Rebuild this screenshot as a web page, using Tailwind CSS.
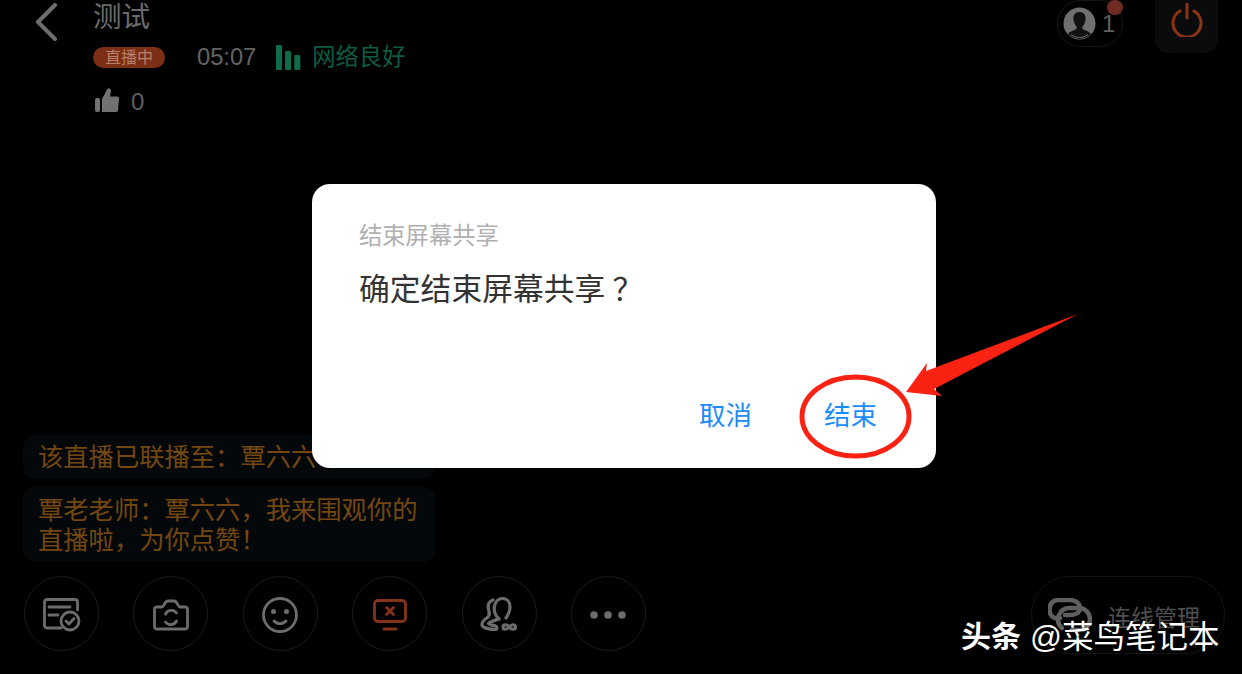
<!DOCTYPE html>
<html lang="zh">
<head>
<meta charset="utf-8">
<script src="https://cdn.jsdelivr.net/npm/@tailwindcss/browser@4"></script>
</head>
<body class="bg-black">
<div class="relative w-[1242px] h-[674px] overflow-hidden bg-black font-['Liberation_Sans','Noto_Sans_CJK_SC',sans-serif]">

  <!-- header -->
  <header class="flex justify-between items-start h-[120px]">
    <div class="flex items-start">
      <svg class="ml-[35px] mt-[3px] w-[23px] h-[38px]" viewBox="0 0 23 38" fill="none" stroke="#6e6e6e" stroke-width="4" stroke-linecap="round" stroke-linejoin="round"><path d="M20 2 L3 19 L20 36"/></svg>
      <div class="ml-[35px] flex flex-col">
        <div class="h-[34px] text-[28.500px] leading-[34px] text-[#6b6b6b]">测试</div>
        <div class="flex items-center mt-[11px] h-[24px]">
          <span class="w-[72px] h-[21px] rounded-full bg-[#7c2f14] text-[#b9806a] text-[16px] leading-[21px] text-center">直播中</span>
          <span class="ml-[32px] text-[23.700px] leading-[24px] text-[#646464]">05:07</span>
          <svg class="ml-[20px] w-[25px] h-[25px]" viewBox="0 0 25 25" fill="#0e6b4c"><rect x="0" y="0" width="6" height="25" rx="1"/><rect x="9" y="6" width="6" height="19" rx="1"/><rect x="18.300" y="10" width="6" height="15" rx="1"/></svg>
          <span class="ml-[11px] text-[23.300px] leading-[24px] text-[#0e5c45]">网络良好</span>
        </div>
        <div class="flex items-center mt-[19px] h-[26px]">
          <svg class="ml-[2px] -mt-[2px] w-[24px] h-[25px]" viewBox="0 0 24 25" fill="#717171"><rect x="0" y="10" width="5" height="14" rx="2"/><path d="M7 11 L12 1.500 C13 -0.500 16 0 16 3 L15 8.500 L22 8.500 C24 8.500 24 10 24 11 L23 22 C23 23.500 22 24 21 24 L7 24 Z"/></svg>
          <span class="ml-[12px] mt-[2px] text-[24px] leading-[26px] text-[#5f5f5f]">0</span>
        </div>
      </div>
    </div>
    <div class="flex items-start">
      <div class="relative flex items-center w-[66px] h-[47px] mr-[32px] rounded-full border border-[#161616] pl-[5px]">
        <svg class="w-[33px] h-[33px]" viewBox="0 0 33 33"><circle cx="16.500" cy="16.500" r="16" fill="#6f6f6f"/><path d="M16.500 5 C11.500 5 10 9 10.500 13 C11 16 12 18 13.500 19.500 L13.500 22 C10 24 6.500 24.500 5 27 A16 16 0 0 0 28 27 C26.500 24.500 23 24 19.500 22 L19.500 19.500 C21 18 22 16 22.500 13 C23 9 21.500 5 16.500 5 Z" fill="#111"/><path d="M8 27.500 A13 13 0 0 0 25 27.500" stroke="#6f6f6f" stroke-width="1" fill="none"/></svg>
        <span class="ml-[6px] text-[24px] leading-[24px] text-[#5f5f5f]">1</span>
        <span class="absolute -top-[1px] left-[49px] w-[16px] h-[15px] rounded-full bg-[#6f2a22]"></span>
      </div>
      <div class="flex items-center justify-center w-[63px] h-[53px] mr-[24px] rounded-b-[14px] bg-[#090b0c]">
        <svg class="w-[32px] h-[34px] -mt-[13px]" viewBox="0 0 32 34" fill="none" stroke="#8a3413" stroke-width="3" stroke-linecap="round"><path d="M9 8 A14 14 0 1 0 23 8"/><path d="M16 1 L16 15"/></svg>
      </div>
    </div>
  </header>

  <!-- chat -->
  <section class="mt-[315px] ml-[23px] w-[412px] flex flex-col gap-[8px] text-[25.300px] leading-[30px] text-[#744710]">
    <div class="h-[44px] pl-[15px] py-[7px] rounded-[12px] bg-[#05080a] whitespace-nowrap">该直播已联播至：覃六六</div>
    <div class="h-[75px] pl-[15px] py-[8px] rounded-[12px] bg-[#05080a] whitespace-nowrap">覃老老师：覃六六，我来围观你的<br>直播啦，为你点赞！</div>
  </section>

  <!-- bottom tools -->
  <footer class="flex items-start mt-[14px] ml-[24px] w-[1201px]">
    <div class="flex gap-[34.400px]">
      <button class="flex items-center justify-center w-[75px] h-[75px] pt-[2px] rounded-full border border-[#1b1b1b]">
        <svg class="w-[38px] h-[34px]" viewBox="0 0 38 34" fill="none" stroke="#6c6c6c" stroke-width="2.800" stroke-linecap="round"><path d="M18 30 L4 30 C2.500 30 1.500 29 1.500 27.500 L1.500 4 C1.500 2.500 2.500 1.500 4 1.500 L32 1.500 C33.500 1.500 34.500 2.500 34.500 4 L34.500 12"/><path d="M6 9 L27 9"/><path d="M6 17 L15 17"/><circle cx="27" cy="23" r="9"/><path d="M23 23 L26 26 L31 20.500"/></svg>
      </button>
      <button class="flex items-center justify-center w-[75px] h-[75px] pt-[2px] rounded-full border border-[#1b1b1b]">
        <svg class="w-[36px] h-[32px]" viewBox="0 0 36 32" fill="none" stroke="#6c6c6c" stroke-width="2.800" stroke-linejoin="round" stroke-linecap="round"><path d="M3.500 8 L9 8 C11 8 11.500 2 15 2 L21 2 C24.500 2 25 8 27 8 L32.500 8 C33.500 8 34.500 9 34.500 10 L34.500 28 C34.500 29 33.500 30 32.500 30 L3.500 30 C2.500 30 1.500 29 1.500 28 L1.500 10 C1.500 9 2.500 8 3.500 8 Z"/><path d="M12.500 15 A6.500 6.500 0 0 1 23.500 14 M23.500 22 A6.500 6.500 0 0 1 12.500 23" stroke-width="2.800"/></svg>
      </button>
      <button class="flex items-center justify-center w-[75px] h-[75px] pt-[2px] rounded-full border border-[#1b1b1b]">
        <svg class="w-[36px] h-[36px]" viewBox="0 0 36 36" fill="none" stroke="#6c6c6c" stroke-width="2.800" stroke-linecap="round"><circle cx="18" cy="18" r="16.500"/><circle cx="11.500" cy="14.500" r="2.500" fill="#6c6c6c" stroke="none"/><circle cx="24.500" cy="14.500" r="2.500" fill="#6c6c6c" stroke="none"/><path d="M12 24 C15 27.500 21 27.500 24 24"/></svg>
      </button>
      <button class="flex items-center justify-center w-[75px] h-[75px] pt-[2px] rounded-full border border-[#1b1b1b]">
        <svg class="w-[34px] h-[32px]" viewBox="0 0 34 32" fill="none" stroke="#86321a" stroke-width="2.800" stroke-linecap="round"><rect x="1.500" y="1.500" width="31" height="21" rx="3.500"/><path d="M13.500 8.500 L20.500 15.500 M20.500 8.500 L13.500 15.500"/><path d="M11 30 L23 30"/></svg>
      </button>
      <button class="flex items-center justify-center w-[75px] h-[75px] pt-[2px] rounded-full border border-[#1b1b1b]">
        <svg class="w-[38px] h-[36px]" viewBox="0 0 38 36" fill="none" stroke="#6c6c6c" stroke-width="3.200" stroke-linecap="round" stroke-linejoin="round"><path d="M19 22 C16 19 13.500 14 14.500 9 C15.500 4 19 1.500 22.500 1.500 C27 1.500 30 5 30 10 C30 14 28 18 26 21"/><path d="M13 3 C9 4 7.500 8 8.500 12 C9.500 16 10 18 8 20 C5 22 1.500 25 2 28 C2.500 31 10 32.500 15 32.500 C17.500 32.500 17.500 30 15.500 29 C13 28 9 28 8.500 26.500 C9 25 13 24.500 18 22"/><path d="M29 30 C27 27 23 27 23 30 C23 33 27 33 29 30 C31 27 35.500 27 35.500 30 C35.500 33 31 33 29 30 Z"/></svg>
      </button>
      <button class="flex items-center justify-center w-[75px] h-[75px] pt-[2px] rounded-full border border-[#1b1b1b]">
        <svg class="w-[36px] h-[8px]" viewBox="0 0 36 8" fill="#6c6c6c"><circle cx="4" cy="4" r="3.800"/><circle cx="18" cy="4" r="3.800"/><circle cx="32" cy="4" r="3.800"/></svg>
      </button>
    </div>
    <div class="ml-auto flex items-center w-[194px] h-[78px] rounded-[38px] border border-[#141414] pl-[16px]">
      <svg class="w-[44px] h-[36px] mt-[2px]" viewBox="0 0 44 36" fill="none" stroke="#5f5f5f" stroke-width="4.500" stroke-linecap="round"><path d="M12 20 L8 20 C3 20 1.500 15 1.500 11 C1.500 6 5 2 10 2 L22 2 C28 2 32 6 32 10 C32 15 27 17 22 17 L17 17"/><path d="M14 30 C10 26 9 21 11 17 C13 12 17 10 22 10 L33 10 C38 11 42 16 42 21 C42 27 38 32 32 32 L24 32"/></svg>
      <span class="ml-[16px] mt-[6px] text-[23px] leading-[24px] text-[#4f4f4f] whitespace-nowrap">连线管理</span>
    </div>
  </footer>

  <!-- dialog -->
  <div class="absolute left-[312px] top-[184px] w-[624px] h-[284px] rounded-[18px] bg-white flex flex-col">
    <h2 class="mt-[38px] ml-[47px] text-[23.300px] leading-[28px] font-normal text-[#b0b0b0]">结束屏幕共享</h2>
    <p class="mt-[20px] ml-[47px] text-[30.800px] leading-[40px] text-[#333333] whitespace-nowrap">确定结束屏幕共享<span class="ml-[7px]">？</span></p>
    <div class="mt-auto mb-[36px] mr-[59px] flex justify-end gap-[72px] text-[26.500px] leading-[32px] text-[#1a8cff]">
      <button>取消</button>
      <button>结束</button>
    </div>
  </div>

  <!-- annotation -->
  <svg class="absolute left-0 top-0 w-[1242px] h-[674px] pointer-events-none" viewBox="0 0 1242 674" fill="none">
    <ellipse cx="855.500" cy="416.500" rx="53.500" ry="39.500" stroke="#fa2313" stroke-width="5"/>
    <path d="M906 392 L927 363 L926 371 L1078 314 L934 389 L942 396 Z" fill="#fa2313"/>
  </svg>

  <!-- watermark -->
  <div class="absolute left-[961px] top-[618px] flex items-center text-white whitespace-nowrap leading-[38px]">
    <span class="text-[30px] font-bold">头条</span>
    <span class="ml-[9px] text-[31.500px]">@菜鸟笔记本</span>
  </div>
</div>
</body>
</html>
